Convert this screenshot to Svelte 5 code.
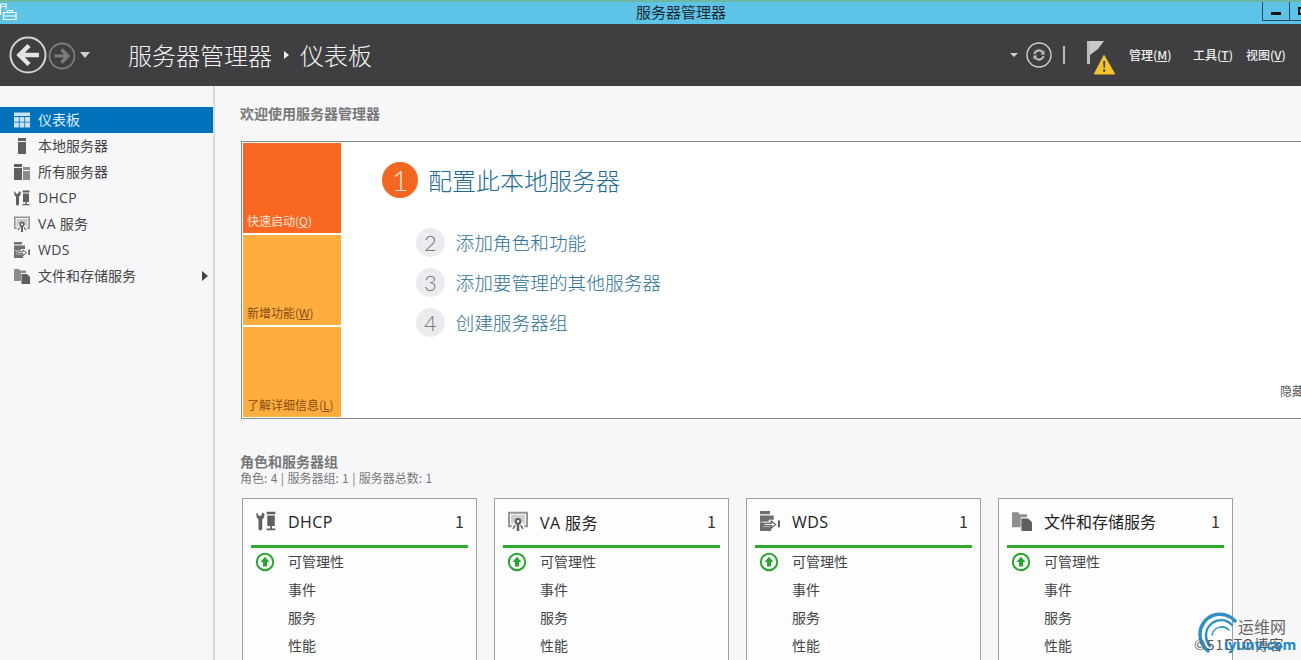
<script>
  const nav = [
    { id: 'dash', label: '仪表板', active: true },
    { id: 'local', label: '本地服务器' },
    { id: 'all', label: '所有服务器' },
    { id: 'dhcp', label: 'DHCP' },
    { id: 'va', label: 'VA 服务' },
    { id: 'wds', label: 'WDS' },
    { id: 'files', label: '文件和存储服务', arrow: true }
  ];
  const steps = [
    { n: 2, t: '添加角色和功能' },
    { n: 3, t: '添加要管理的其他服务器' },
    { n: 4, t: '创建服务器组' }
  ];
  const tiles = [
    { t: '快速启动', k: 'Q', cls: 'hot' },
    { t: '新增功能', k: 'W', cls: '' },
    { t: '了解详细信息', k: 'L', cls: '' }
  ];
  const cards = [
    { id: 'dhcp', t: 'DHCP' },
    { id: 'va', t: 'VA 服务' },
    { id: 'wds', t: 'WDS' },
    { id: 'files', t: '文件和存储服务' }
  ];
  const isLatin = (s) => /^[A-Z]/.test(s);
</script>

{#snippet icon(id, color)}
  <svg class="ico" viewBox="0 0 16 16" width="16" height="16" fill={color}>
    {#if id === 'dash'}
      <path d="M0 .5h16v3.500H0zM0 5h4.800v4.800H0zM5.600 5h4.800v4.800H5.600zM11.200 5H16v4.800h-4.800zM0 10.600h4.800v4.900H0zM5.600 10.600h4.800v4.900H5.600zM11.200 10.600H16v4.900h-4.800z"/>
    {:else if id === 'local'}
      <path d="M4 0h8v3H4zM4 4h8v12H4z"/>
    {:else if id === 'all'}
      <path d="M0 0h8v3H0zM0 4h8v12H0z"/><path d="M9 3h7v3H9zM9 7h7v9H9z" opacity=".7"/>
    {:else if id === 'dhcp'}
      <path d="M.8 1 2 3.800h2.200L5.200 1 6.800 2.500 6.500 5 5 6.800V14a1.500 1.500 0 0 1-3 0V6.800L.5 5 .2 2.500z"/>
      <path d="M8.500 .5h7v2h-7zM9 3.500h6V12H9zM11.300 12h1.400v2H15.500v1.300h-7V14h2.800z"/>
    {:else if id === 'va'}
      <path fill-rule="evenodd" d="M0 .5h16V13h-2.600l-.8-1.600h1.800V2.100H1.600v9.300h1.800L2.600 13H0z" opacity=".65"/>
      <path d="M2.500 3h11v7.500h-1.200a4.500 4.500 0 0 0-8.600 0H2.500z" opacity=".3"/>
      <path fill-rule="evenodd" d="M8 5.500a2.800 2.800 0 0 1 1 5.400V16H7v-5.100A2.800 2.800 0 0 1 8 5.500zm0 1.700a1.100 1.100 0 1 0 0 2.200 1.100 1.100 0 0 0 0-2.200z"/>
      <path d="M3.500 14l1.800-3 1 .6-1.800 3zM12.500 14l-1.800-3-1 .6 1.800 3z"/>
    {:else if id === 'wds'}
      <path d="M0 0h8v2.500H0zM0 3.500h11V7H7v1.500H0zM0 9h2.500v3.500H9V16H0z" opacity=".9"/>
      <path d="M3 9.800h6V8l3.500 2.800L9 13.500v-1.800H3z" fill="none" stroke={color} stroke-width="1"/>
      <path d="M14.300 7.500H16V13h-1.700z"/>
    {:else}
      <path d="M0 1h5l1 1.500h6V5H7v8H0z" opacity=".7"/><path d="M7.500 6H13l3 3v7H7.500z"/>
    {/if}
  </svg>
{/snippet}

<div class="app">
  <div class="title">
    <svg class="appicon" viewBox="0 0 17 18" width="17" height="18" fill="none" stroke="#fff" stroke-width="1.200">
      <path d="M.500 1h5.500v5M0 3.500h6M.500 1v11" /><path d="M3.500 9.500h12.500v7H3.500zM7.500 9.500V7.500h5v2M3.500 13h12.500"/>
    </svg>
    <span>服务器管理器</span>
    <div class="winbtns"><span class="wb"><i class="min"></i></span><span class="wb last"><i class="max"></i></span></div>
  </div>

  <header class="bar">
    <svg class="back" viewBox="0 0 38 38" width="38" height="38" fill="none">
      <circle cx="19" cy="19" r="17.500" stroke="#d4d4d4" stroke-width="2"/>
      <path d="M30 19H11M20 9.500 10.500 19 20 28.500" stroke="#e4e4e4" stroke-width="4.500"/>
    </svg>
    <svg class="fwd" viewBox="0 0 28 28" width="28" height="28" fill="none">
      <circle cx="14" cy="14" r="12.500" stroke="#7c7c7c" stroke-width="1.800"/>
      <path d="M6.500 14H20M13.500 7.500 20 14l-6.500 6.500" stroke="#7c7c7c" stroke-width="3.200"/>
    </svg>
    <i class="caret big"></i>
    <h1>服务器管理器<i class="crumb"></i>仪表板</h1>
    <div class="tools">
      <i class="caret small"></i>
      <svg class="refresh" viewBox="0 0 26 26" width="26" height="26" fill="none">
        <circle cx="13" cy="13" r="12" stroke="#cfcfcf" stroke-width="1.400"/>
        <path d="M7.500 12a5.600 5.600 0 0 1 9.800-2.600l1-1.300.4 4.400h-4.400l1.700-1.400A3.800 3.800 0 0 0 9.300 12.300z" fill="#bdbdbd"/>
        <path d="M18.500 14a5.600 5.600 0 0 1-9.800 2.600l-1 1.300-.4-4.400h4.400l-1.700 1.400a3.800 3.800 0 0 0 6.700-1.200z" fill="#bdbdbd"/>
      </svg>
      <i class="divider"></i>
      <div class="flag">
        <svg viewBox="0 0 30 36" width="30" height="36">
          <path d="M1 1h3v23H1z" fill="#bdbdbd"/><path d="M4 1h14l-6 8-8 6z" fill="#c9c9c9"/>
          <path d="M18 14.500 29 33.500a1 1 0 0 1-1 1H9a1 1 0 0 1-1-1z" fill="#f3c22f"/>
          <path d="M17.200 21h2l-.4 7h-1.200zM17.200 29.500h2v2.200h-2z" fill="#4a3a10"/>
        </svg>
      </div>
      <nav class="menu">
        <span class="m1">管理(<u>M</u>)</span>
        <span class="m2">工具(<u>T</u>)</span>
        <span class="m3">视图(<u>V</u>)</span>
      </nav>
    </div>
  </header>

  <div class="body">
    <aside class="side">
      <ul>
        {#each nav as n}
          <li class:active={n.active}>
            {@render icon(n.id, n.active ? '#c9e1f2' : '#5f5f62')}
            <span class:latin={isLatin(n.label)}>{n.label}</span>
            {#if n.arrow}<i class="tri"></i>{/if}
          </li>
        {/each}
      </ul>
    </aside>

    <main class="main">
      <h2 class="welcome">欢迎使用服务器管理器</h2>

      <section class="panel">
        <div class="tiles">
          {#each tiles as t}
            <div class="tile {t.cls}">{t.t}(<u>{t.k}</u>)</div>
          {/each}
        </div>
        <div class="steps">
          <div class="first"><span class="num1">1</span><a href="#1">配置此本地服务器</a></div>
          {#each steps as s}
            <div class="step"><span class="num">{s.n}</span><a href="#{s.n}">{s.t}</a></div>
          {/each}
        </div>
        <span class="hide">隐藏</span>
      </section>

      <h2 class="roles">角色和服务器组</h2>
      <p class="sub">角色: 4 | 服务器组: 1 | 服务器总数: 1</p>

      <div class="cards">
        {#each cards as c}
          <article class="card">
            <div class="chead">
              <span class="cicon">{@render icon(c.id, '#5f5f62')}</span>
              <span class="cname" class:latin={isLatin(c.t)}>{c.t}</span>
              <span class="ccount">1</span>
            </div>
            <div class="row">
              <svg class="ok" viewBox="0 0 20 20" width="20" height="20" fill="none">
                <circle cx="10" cy="10" r="8.200" stroke="#2aa52e" stroke-width="2"/>
                <path d="M10 4.800 14.500 10H12v4.500H8V10H5.500z" fill="#2aa52e"/>
              </svg>
              <span>可管理性</span>
            </div>
            <div class="row">事件</div>
            <div class="row">服务</div>
            <div class="row">性能</div>
          </article>
        {/each}
      </div>
    </main>
  </div>

  <div class="mark">
    <svg viewBox="0 0 44 44" width="44" height="44" fill="none" stroke="#2f8fc4" stroke-linecap="round">
      <path d="M38 9A20 20 0 0 0 3 22c0 7 3 13 8 17" stroke-width="3.500"/>
      <path d="M35 13A15 15 0 0 0 9 23c0 4 1 8 4 11" stroke-width="2.500"/>
      <path d="M32 18a10 10 0 0 0-17 5" stroke-width="1.500"/>
    </svg>
    <span class="mcn">运维网</span>
    <span class="mgray">©51CTO博客</span>
    <b class="mblue">iyunv.com</b>
  </div>
</div>

<style>
  :global(body) { margin: 0; background: #f7f7fa; }
  .app {
    width: 1301px; height: 660px; overflow: hidden; position: relative;
    font-family: "Noto Sans CJK SC", "Noto Sans", sans-serif; color: #444;
    display: flex; flex-direction: column;
  }
  .latin { font-family: "Open Sans", "Noto Sans CJK SC", sans-serif; letter-spacing: .3px; }
  .title {
    height: 22px; flex: none; background: #5dc4e8; border-top: 2px solid #6fb8a0;
    display: flex; justify-content: center; align-items: center; position: relative;
    font-size: 15px; color: #1f2a30; padding-left: 61px; box-sizing: content-box;
  }
  .title > span { margin-top: -3px; }
  .appicon { position: absolute; left: 0; top: 1px; }
  .winbtns { position: absolute; left: 1262px; top: 0; display: flex; }
  .wb { width: 27px; height: 19px; border: 1px solid #2c4b60; border-top: 0; border-right: 0; display: flex; justify-content: center; align-items: center; box-sizing: border-box; }
  .wb.last { justify-content: flex-start; padding-left: 8px; }
  .min { width: 10px; height: 3px; background: #111; margin-top: 4px; }
  .max { width: 9px; height: 8px; border: 2px solid #111; box-sizing: border-box; flex: none; }

  .bar {
    height: 62px; flex: none; background: #3f3f42; display: flex; align-items: center;
    color: #f2f2f2; padding-left: 9px;
  }
  .fwd { margin-left: 1px; margin-top: 1px; }
  .caret { display: block; width: 0; height: 0; border-left: 5px solid transparent; border-right: 5px solid transparent; border-top: 6px solid #d0d0d0; }
  .caret.big { margin-left: 4px; margin-right: 38px; margin-top: -1px; }
  .caret.small { border-left-width: 4px; border-right-width: 4px; border-top-width: 4px; }
  h1 { margin: 0; font-size: 24px; font-weight: 300; line-height: 1; color: #f4f4f4; display: flex; align-items: center; }
  .crumb { display: block; width: 0; height: 0; margin: 0 11px 0 12px; border-top: 4px solid transparent; border-bottom: 4px solid transparent; border-left: 5px solid #eee; }
  .tools { margin-left: auto; display: flex; align-items: center; height: 100%; }
  .refresh { margin-left: 8px; }
  .divider { display: block; width: 2px; height: 18px; background: #bbb; margin-left: 11px; margin-right: 21px; }
  .flag { width: 30px; height: 36px; margin-top: 6px; }
  .menu { display: flex; font-size: 12px; font-weight: 500; color: #eee; margin-left: 13px; margin-top: -1px; width: 172px; }
  .menu span { white-space: nowrap; }
  .m1 { width: 64px; } .m2 { width: 53px; }

  .body { flex: 1; display: flex; min-height: 0; }
  .side { width: 213px; flex: none; border-right: 2px solid #d9d9dc; box-sizing: content-box; padding-top: 21px; }
  ul { list-style: none; margin: 0; padding: 0; }
  li { height: 26px; display: flex; align-items: center; font-size: 14px; color: #444; padding-left: 14px; position: relative; }
  li span { margin-left: 8px; margin-top: -2px; }
  li.active { background: #0072bc; color: #dbeeff; }
  .tri { position: absolute; left: 202px; top: 8px; width: 0; height: 0; border-top: 5px solid transparent; border-bottom: 5px solid transparent; border-left: 6px solid #444; }
  .ico { display: block; flex: none; }

  .main { flex: 1; padding-left: 25px; min-width: 0; }
  h2 { margin: 0; font-size: 14px; font-weight: 700; color: #777; line-height: 20px; white-space: nowrap; }
  .welcome { margin-top: 17px; }
  .panel {
    margin-top: 18px; margin-left: 1px; width: 1100px; height: 278px; box-sizing: border-box;
    border: 1px solid #8a8a8a; background: #fff; display: flex; padding: 1px; position: relative;
  }
  .tiles { width: 98px; flex: none; display: flex; flex-direction: column; gap: 2px; }
  .tile { height: 90px; background: #fdae3f; color: #8a4a10; font-size: 12px; display: flex; align-items: flex-end; padding: 0 0 4px 4px; box-sizing: border-box; line-height: 16px; white-space: nowrap; }
  .tile.hot { background: #f96722; color: #fbe6d8; }
  .steps { padding: 19px 0 0 41px; }
  .first { display: flex; align-items: center; }
  .num1 { width: 36px; height: 36px; border-radius: 50%; background: #f3661f; color: #fbe3d5; font-family: Lato, sans-serif; font-size: 28px; font-weight: 300; display: flex; justify-content: center; align-items: center; margin-right: 10px; }
  a { text-decoration: none; color: #236b94; white-space: nowrap; }
  .first a { font-size: 24px; line-height: 36px; font-weight: 300; }
  .step { display: flex; align-items: center; height: 40px; padding-left: 34px; }
  .first + .step { margin-top: 24px; }
  .step a { font-size: 18.700px; font-weight: 300; color: #2c7096; margin: -2px 0 0 -.5px; }
  .num { width: 29px; height: 29px; border-radius: 50%; background: #ececf0; color: #777; font-family: Lato, sans-serif; font-size: 22px; font-weight: 300; display: flex; justify-content: center; align-items: center; margin-right: 11px; }
  .hide { position: absolute; left: 1038px; top: 240px; font-size: 12px; color: #555; }

  .roles { margin-top: 32px; }
  .sub { margin: -2px 0 0; font-size: 12px; color: #777; line-height: 17px; white-space: nowrap; word-spacing: .7px; }
  .cards { display: flex; gap: 17px; margin-top: 12px; margin-left: 2px; }
  .card { width: 235px; flex: none; height: 200px; box-sizing: border-box; border: 1px solid #a0a0a0; border-bottom: 0; background: #fdfdfe; padding: 0 8px; }
  .chead { display: flex; align-items: center; border-bottom: 3px solid #2aab2e; width: 217px; box-sizing: border-box; height: 49px; padding-bottom: 2px; }
  .cicon { width: 37px; flex: none; padding-left: 5px; box-sizing: border-box; }
  .cicon :global(svg) { width: 20px; height: 20px; }
  .cname { font-size: 16px; color: #222; white-space: nowrap; }
  .cname.latin { letter-spacing: .4px; margin-top: 1px; }
  .ccount { margin-left: auto; margin-right: 4px; font-size: 16px; color: #333; }
  .row { height: 28px; display: flex; align-items: center; font-size: 14px; color: #444; padding: 0 0 2px 37px; box-sizing: border-box; position: relative; }
  .ok { position: absolute; left: 4px; top: 4px; }

  .mark { position: absolute; left: 1193px; top: 610px; width: 108px; height: 50px; }
  .mark svg { position: absolute; left: 4px; top: 2px; }
  .mcn { position: absolute; left: 45px; top: 6px; font-size: 16px; line-height: 20px; color: #666; }
  .mgray { position: absolute; left: 1px; top: 25px; font-size: 14px; line-height: 18px; color: #555; white-space: nowrap; letter-spacing: 1px; }
  .mblue { position: absolute; left: 31px; top: 25px; font-family: "Open Sans", sans-serif; font-size: 14px; line-height: 20px; color: #1c86c8; font-weight: 700; white-space: nowrap; }
</style>
